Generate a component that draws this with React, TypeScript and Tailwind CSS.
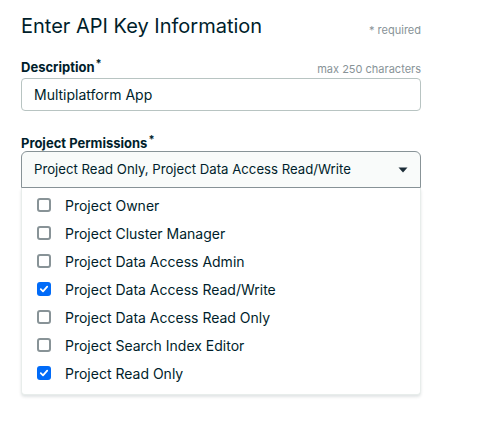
import { useState } from "react";

const PERMISSIONS = [
  "Project Owner",
  "Project Cluster Manager",
  "Project Data Access Admin",
  "Project Data Access Read/Write",
  "Project Data Access Read Only",
  "Project Search Index Editor",
  "Project Read Only",
];

function Checkbox({ checked }: { checked: boolean }) {
  if (checked) {
    return (
      <span className="flex h-[14px] w-[14px] items-center justify-center rounded-[3px] bg-[#016bf8]">
        <svg width="10" height="10" viewBox="0 0 10 10" fill="none">
          <path d="M1.8 5.2 L4 7.3 L8.2 2.6" stroke="white" strokeWidth="1.8" strokeLinecap="round" strokeLinejoin="round" />
        </svg>
      </span>
    );
  }
  return <span className="block h-[14px] w-[14px] rounded-[3px] border-2 border-[#889397] bg-white" />;
}

function Star() {
  return <span className="relative -top-[5px] ml-[1px] text-[11px] leading-none">*</span>;
}

export default function App() {
  const [selected, setSelected] = useState<string[]>([
    "Project Data Access Read/Write",
    "Project Read Only",
  ]);

  function toggle(p: string) {
    setSelected((s) => (s.includes(p) ? s.filter((x) => x !== p) : [...s, p]));
  }

  return (
    <main
      className="min-h-[424px] w-[480px] bg-white text-[#001e2b]"
      style={{ fontFamily: "Inter, 'Liberation Sans', sans-serif" }}
    >
      <div className="w-[400px] pl-[21px] pt-[12px] box-content">
        <div className="flex items-end justify-between">
          <h1 className="text-[20px] leading-[28px] font-normal">Enter API Key Information</h1>
          <span className="mb-[2px] text-[11px] text-[#889397]">* required</span>
        </div>

        <div className="mt-[18px] flex items-end justify-between">
          <label className="text-[13px] leading-[18px] font-bold">
            Description
            <Star />
          </label>
          <span className="text-[11px] leading-[14px] text-[#889397]">max 250 characters</span>
        </div>
        <div className="mt-[2px] flex h-[33px] items-center rounded-[4px] border border-[#b8c4c2] px-[12px] text-[14px]">
          Multiplatform App
        </div>

        <label className="mt-[24px] block text-[13px] leading-[16px] font-bold">
          Project Permissions
          <Star />
        </label>
        <div className="relative">
          <div className="flex h-[37px] items-center justify-between rounded-t-[6px] border border-[#889397] bg-[#f9fbfa] pl-[12px] pr-[12px] text-[13.2px]">
            <span>{selected.length ? "Project Read Only, Project Data Access Read/Write" : "Select"}</span>
            <svg width="10" height="6" viewBox="0 0 10 6">
              <path d="M0.5 0.5 L9.5 0.5 L5 5.5 Z" fill="#1c2d38" />
            </svg>
          </div>
          <ul className="rounded-b-[4px] border border-t-0 border-[#e8edeb] bg-white pb-[7px] pt-[3px] shadow-[0_2px_3px_rgba(0,30,43,0.12)]">
            {PERMISSIONS.map((p) => (
              <li
                key={p}
                onClick={() => toggle(p)}
                className="flex h-[28px] cursor-pointer items-center gap-[14px] pl-[15px] text-[14px]"
              >
                <Checkbox checked={selected.includes(p)} />
                <span>{p}</span>
              </li>
            ))}
          </ul>
        </div>
      </div>
    </main>
  );
}
